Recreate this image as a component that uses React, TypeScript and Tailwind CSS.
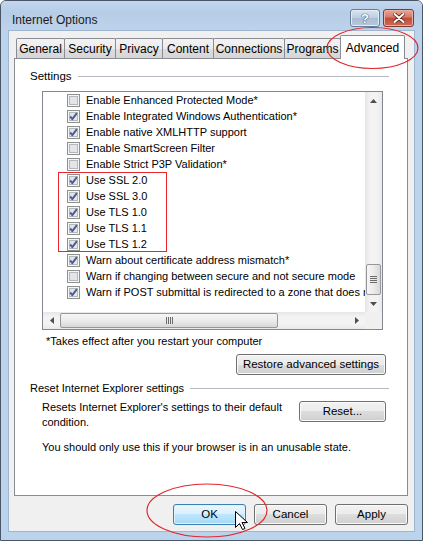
import React from "react";

type Row = { label: string; checked: boolean };

const rows: Row[] = [
  { label: "Enable Enhanced Protected Mode*", checked: false },
  { label: "Enable Integrated Windows Authentication*", checked: true },
  { label: "Enable native XMLHTTP support", checked: true },
  { label: "Enable SmartScreen Filter", checked: false },
  { label: "Enable Strict P3P Validation*", checked: false },
  { label: "Use SSL 2.0", checked: true },
  { label: "Use SSL 3.0", checked: true },
  { label: "Use TLS 1.0", checked: true },
  { label: "Use TLS 1.1", checked: true },
  { label: "Use TLS 1.2", checked: true },
  { label: "Warn about certificate address mismatch*", checked: true },
  { label: "Warn if changing between secure and not secure mode", checked: false },
  { label: "Warn if POST submittal is redirected to a zone that does not permit posts", checked: true },
];

function CheckBox({ checked }: { checked: boolean }) {
  return (
    <svg width="13" height="13" viewBox="0 0 13 13" className="shrink-0">
      <rect x="0.5" y="0.5" width="12" height="12" fill="#f6f6f6" stroke="#8e8f8f" />
      <rect x="2.5" y="2.5" width="8" height="8" fill="#e3e5e8" stroke="#b4b8be" />
      {checked && (
        <path d="M3.2 6.4 L5.3 9.2 L9.9 3.2" stroke="#4a5c8f" strokeWidth="1.9" fill="none" strokeLinejoin="round" />
      )}
    </svg>
  );
}

function Arrow({ dir }: { dir: "up" | "down" | "left" | "right" }) {
  const d =
    dir === "up"
      ? "M0 4 L3.5 0 L7 4 Z"
      : dir === "down"
      ? "M0 0 L7 0 L3.5 4 Z"
      : dir === "left"
      ? "M4 0 L4 7 L0 3.5 Z"
      : "M0 0 L4 3.5 L0 7 Z";
  const w = dir === "up" || dir === "down" ? 7 : 4;
  const h = dir === "up" || dir === "down" ? 4 : 7;
  return (
    <svg width={w} height={h} viewBox={`0 0 ${w} ${h}`}>
      <path d={d} fill="#4f4f4f" />
    </svg>
  );
}

function WinButton({ children, w, primary }: { children: React.ReactNode; w: string; primary?: boolean }) {
  return (
    <div
      className={
        "h-[21px] rounded-[3px] border flex items-center justify-center text-[11.5px] text-black " +
        w +
        " " +
        (primary
          ? "border-[#3c7fb1] bg-[linear-gradient(to_bottom,#eaf6fd_0%,#d9f0fc_50%,#bee6fd_50%,#a7d9f5_100%)] shadow-[inset_0_0_0_1px_#dff2fc]"
          : "border-[#707070] bg-[linear-gradient(to_bottom,#f2f2f2_0%,#ebebeb_50%,#dddddd_50%,#cfcfcf_100%)] shadow-[inset_0_0_0_1px_#fbfbfb]")
      }
    >
      {children}
    </div>
  );
}

function Tab({ label, w, selected }: { label: string; w: string; selected?: boolean }) {
  if (selected) {
    return (
      <div
        className={
          "relative z-10 -ml-px -mb-px h-[24px] border border-b-0 border-[#898c95] rounded-t-[2px] bg-white flex items-start justify-center pt-[3px] text-[12px] " +
          w
        }
      >
        {label}
      </div>
    );
  }
  return (
    <div
      className={
        "-ml-px first:ml-0 h-[20px] border border-b-0 border-[#898c95] rounded-t-[2px] bg-[linear-gradient(to_bottom,#f3f3f3_0%,#ebebeb_50%,#dedede_50%,#d6d6d6_100%)] flex items-center justify-center text-[12px] " +
        w
      }
    >
      {label}
    </div>
  );
}

export default function App() {
  return (
    <div className="relative w-[423px] h-[541px] font-['Liberation_Sans',Arial,sans-serif] text-black select-none">
      {/* window */}
      <div className="w-[423px] h-[541px] border border-[#4a5666] rounded-t-[6px] bg-[#bcd3ec] flex flex-col">
        {/* title bar */}
        <div className="h-[29px] shrink-0 flex items-start pt-[8px] pl-[11px] pr-[8px] rounded-t-[5px] bg-[linear-gradient(to_bottom,#c2d6ee_0%,#b7cde7_40%,#bdd3ec_100%)]">
          <div className="mt-[4px] text-[12px] leading-[14px] text-[#1a1a1a]">Internet Options</div>
          <div className="ml-auto flex gap-[3px]">
            <div className="w-[30px] h-[18px] rounded-[3px] border border-[#6a7d96] bg-[linear-gradient(to_bottom,#d9e4f1_0%,#bccde2_50%,#a9bdd6_50%,#b6c8de_100%)] flex items-center justify-center shadow-[inset_0_0_0_1px_#e4ecf6]">
              <span className="text-[13px] leading-[13px] font-bold text-white [text-shadow:0_0_1px_#26364d,0_0_1px_#26364d]">?</span>
            </div>
            <div className="w-[31px] h-[18px] rounded-[3px] border border-[#7a3a33] bg-[linear-gradient(to_bottom,#e8a596_0%,#d47a68_45%,#c24a37_50%,#cf6a55_100%)] flex items-center justify-center shadow-[inset_0_0_0_1px_#eab1a4]">
              <svg width="12" height="10" viewBox="0 0 12 10">
                <path d="M1.5 1 L10.5 9 M10.5 1 L1.5 9" stroke="#5a2118" strokeWidth="3.6" strokeLinecap="round" />
                <path d="M1.5 1 L10.5 9 M10.5 1 L1.5 9" stroke="#ffffff" strokeWidth="2" strokeLinecap="round" />
              </svg>
            </div>
          </div>
        </div>

        {/* client area */}
        <div className="mx-[7px] h-[502px] shrink-0 border border-[#9fb6d0] bg-[#f0f0f0] flex flex-col pt-[5px] pb-[6px]">
          {/* tabs */}
          <div className="h-[22px] flex items-end ml-[7px]">
            <Tab label="General" w="w-[49px]" />
            <Tab label="Security" w="w-[52px]" />
            <Tab label="Privacy" w="w-[48px]" />
            <Tab label="Content" w="w-[52px]" />
            <Tab label="Connections" w="w-[72px]" />
            <Tab label="Programs" w="w-[57px]" />
            <Tab label="Advanced" w="w-[65px]" selected />
          </div>

          {/* panel */}
          <div className="ml-[5px] mr-[6px] h-[438px] border border-[#898c95] bg-white flex flex-col pt-[10px] text-[11px]">
            <div className="ml-[15px] mr-[18px] h-[14px] flex items-center gap-[6px]">
              <span className="leading-[14px] text-[11.5px]">Settings</span>
              <div className="flex-1 border-t border-[#b5b9c0]" />
            </div>

            {/* listbox */}
            <div className="mt-[8px] ml-[27px] mr-[24px] h-[239px] border border-[#828790] flex flex-col">
              <div className="flex-1 flex min-h-0">
                <div className="flex-1 min-w-0 overflow-hidden pl-[24px]">
                  {rows.map((r) => (
                    <div key={r.label} className="h-[16px] flex items-center gap-[6px] whitespace-nowrap">
                      <CheckBox checked={r.checked} />
                      <span className="leading-[16px]">{r.label}</span>
                    </div>
                  ))}
                </div>
                {/* vertical scrollbar */}
                <div className="w-[17px] flex flex-col bg-[linear-gradient(to_right,#e6e6e6,#f3f3f3_30%,#f3f3f3_70%,#e9e9e9)]">
                  <div className="h-[17px] flex items-center justify-center">
                    <Arrow dir="up" />
                  </div>
                  <div className="flex-1" />
                  <div className="mx-px h-[31px] rounded-[2px] border border-[#979797] bg-[linear-gradient(to_right,#f5f5f5_0%,#ececec_50%,#d8d8d8_100%)] flex flex-col items-center justify-center gap-[1px]">
                    <div className="w-[7px] h-px bg-[#6b6b6b]" />
                    <div className="w-[7px] h-px bg-[#6b6b6b]" />
                    <div className="w-[7px] h-px bg-[#6b6b6b]" />
                    <div className="w-[7px] h-px bg-[#6b6b6b]" />
                  </div>
                  <div className="h-[17px] flex items-center justify-center">
                    <Arrow dir="down" />
                  </div>
                </div>
              </div>
              <div className="h-[17px] flex">
                {/* horizontal scrollbar */}
                <div className="flex-1 flex items-stretch bg-[linear-gradient(to_bottom,#e6e6e6,#f3f3f3_30%,#f3f3f3_70%,#e9e9e9)]">
                  <div className="w-[17px] flex items-center justify-center">
                    <Arrow dir="left" />
                  </div>
                  <div className="w-[218px] my-px rounded-[2px] border border-[#979797] bg-[linear-gradient(to_bottom,#f5f5f5_0%,#ececec_50%,#d8d8d8_100%)] flex items-center justify-center gap-[1px]">
                    <div className="h-[7px] w-px bg-[#6b6b6b]" />
                    <div className="h-[7px] w-px bg-[#6b6b6b]" />
                    <div className="h-[7px] w-px bg-[#6b6b6b]" />
                    <div className="h-[7px] w-px bg-[#6b6b6b]" />
                  </div>
                  <div className="flex-1" />
                  <div className="w-[17px] flex items-center justify-center">
                    <Arrow dir="right" />
                  </div>
                </div>
                <div className="w-[17px] bg-[#f0f0f0]" />
              </div>
            </div>

            <div className="mt-[4px] ml-[31px] leading-[14px]">*Takes effect after you restart your computer</div>
            <div className="mt-[6px] self-end mr-[21px]">
              <WinButton w="w-[150px]">Restore advanced settings</WinButton>
            </div>

            <div className="mt-[6px] ml-[15px] mr-[18px] h-[14px] flex items-center gap-[6px]">
              <span className="leading-[14px]">Reset Internet Explorer settings</span>
              <div className="flex-1 border-t border-[#b5b9c0]" />
            </div>

            <div className="mt-[5px] ml-[27px] mr-[21px] flex items-start">
              <div className="leading-[15px] whitespace-nowrap">
                Resets Internet Explorer's settings to their default
                <br />
                condition.
              </div>
              <div className="ml-auto mt-px">
                <WinButton w="w-[87px]">Reset...</WinButton>
              </div>
            </div>

            <div className="mt-[10px] ml-[27px] leading-[14px]">
              You should only use this if your browser is in an unusable state.
            </div>
          </div>

          {/* bottom buttons */}
          <div className="mt-[8px] mr-[6px] flex justify-end gap-[8px]">
            <WinButton w="w-[73px]" primary>
              OK
            </WinButton>
            <WinButton w="w-[73px]">Cancel</WinButton>
            <WinButton w="w-[73px]">Apply</WinButton>
          </div>
        </div>
      </div>

      {/* annotations */}
      <svg className="absolute left-0 top-0 pointer-events-none" width="423" height="541" viewBox="0 0 423 541">
        <ellipse cx="372.5" cy="48" rx="45.5" ry="20.5" fill="none" stroke="#e0282e" strokeWidth="1.2" />
        <rect x="58.5" y="172.5" width="108" height="79" fill="none" stroke="#e8262c" strokeWidth="1" />
        <ellipse cx="207" cy="510.5" rx="60" ry="26.5" fill="none" stroke="#e0282e" strokeWidth="1.2" />
        <path
          d="M235.5 511.5 L235.5 527.5 L239.5 523.5 L242.5 529.5 L245 528.5 L242 522.5 L247.5 522.5 Z"
          fill="#ffffff"
          stroke="#000000"
          strokeWidth="1"
          strokeLinejoin="round"
        />
      </svg>
    </div>
  );
}
